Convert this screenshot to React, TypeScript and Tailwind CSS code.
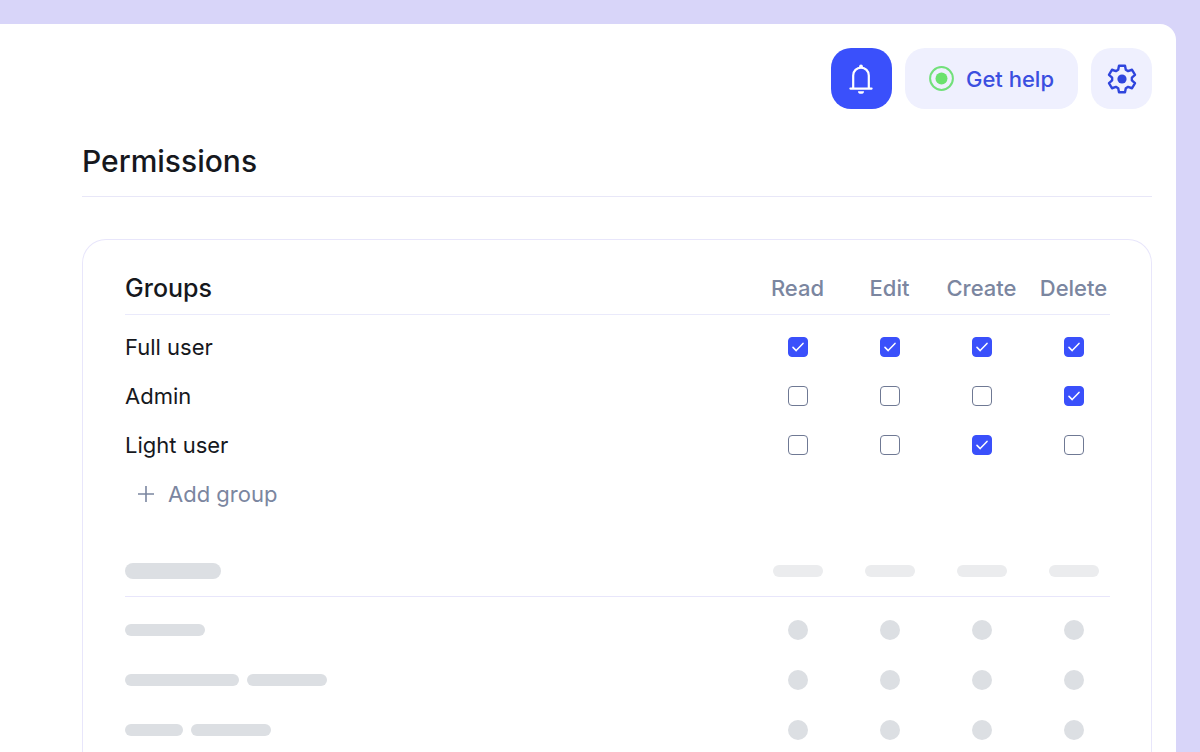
import { useState } from 'react';

const permissions = ['Read', 'Edit', 'Create', 'Delete'];

interface Group {
    name: string;
    granted: string[];
}

const initialGroups: Group[] = [
    { name: 'Full user', granted: ['Read', 'Edit', 'Create', 'Delete'] },
    { name: 'Admin', granted: ['Delete'] },
    { name: 'Light user', granted: ['Create'] },
];

const placeholderRows = [['w-20'], ['w-[114px]', 'w-20'], ['w-[58px]', 'w-20']];

function BellIcon() {
    return (
        <svg width="24" height="30" viewBox="0 0 24 30" fill="none" aria-hidden="true">
            <path d="M4.2 24.5V11.4a7.8 7.8 0 0 1 15.6 0v13.1" stroke="#fff" strokeWidth="2.2" />
            <path d="M1.4 24.6h21.2" stroke="#fff" strokeWidth="2.2" strokeLinecap="round" />
            <circle cx="12" cy="2.4" r="1.9" fill="#fff" />
            <path d="M9 27.2h6a3 2.6 0 0 1-6 0z" fill="#fff" />
        </svg>
    );
}

function GearIcon() {
    return (
        <svg width="30" height="30" viewBox="-15 -15 30 30" fill="none" aria-hidden="true">
            <path
                d="M-3.8-9.2-3-13.3H3L3.8-9.2 6.07-7.89 10.02-9.25 13.02-4.05 9.87-1.31V1.31L13.02 4.05 10.02 9.25 6.07 7.89 3.8 9.2 3 13.3H-3L-3.8 9.2-6.07 7.89-10.02 9.25-13.02 4.05-9.87 1.31V-1.31L-13.02-4.05-10.02-9.25-6.07-7.89Z"
                stroke="#2f45dd"
                strokeWidth="2.4"
                strokeLinejoin="round"
            />
            <circle r="4.6" fill="#2f45dd" />
        </svg>
    );
}

function OnlineIcon() {
    return (
        <svg width="25" height="25" viewBox="0 0 25 25" fill="none" aria-hidden="true">
            <circle cx="12.5" cy="12.5" r="11.4" stroke="#72e07a" strokeWidth="2" />
            <circle cx="12.5" cy="12.5" r="6" fill="#6be26d" />
        </svg>
    );
}

interface PermissionCheckboxProps {
    label: string;
    checked: boolean;
    onChange: () => void;
}

function PermissionCheckbox({ label, checked, onChange }: PermissionCheckboxProps) {
    return (
        <label className="mx-auto grid w-5 h-5 cursor-pointer place-items-center">
            <input
                type="checkbox"
                aria-label={label}
                checked={checked}
                onChange={onChange}
                className="col-start-1 row-start-1 w-5 h-5 appearance-none rounded border border-[#6f7994] bg-white checked:border-[#3a50fb] checked:bg-[#3a50fb] cursor-pointer"
            />
            {checked && (
                <svg
                    width="12"
                    height="10"
                    viewBox="0 0 12 10"
                    fill="none"
                    aria-hidden="true"
                    className="col-start-1 row-start-1 pointer-events-none"
                >
                    <path d="M1 5.4 4.2 8.6 11 1.4" stroke="#fff" strokeWidth="1.5" strokeLinecap="round" strokeLinejoin="round" />
                </svg>
            )}
        </label>
    );
}

export default function App() {
    const [groups, setGroups] = useState(initialGroups);

    const toggle = (name: string, permission: string) => {
        setGroups(groups.map((group) => {
            if (group.name !== name) return group;
            const granted = group.granted.includes(permission)
                ? group.granted.filter((item) => item !== permission)
                : [...group.granted, permission];
            return { ...group, granted };
        }));
    };

    return (
        <div className="flex h-screen overflow-hidden bg-[#d8d5f9] pt-6 pr-6 font-['Inter',sans-serif] text-[#16181d]">
            <main className="flex flex-1 flex-col rounded-tr-2xl bg-white pt-6 pr-6 pl-[82px]">
                {/* Toolbar */}
                <header className="flex shrink-0 justify-end gap-[13px]">
                    <button
                        type="button"
                        aria-label="Notifications"
                        className="flex w-[61px] h-[61px] items-center justify-center rounded-[20px] bg-[#3a50fb]"
                    >
                        <BellIcon />
                    </button>
                    <button
                        type="button"
                        className="flex h-[61px] items-center gap-3 rounded-[20px] bg-[#eff0fe] px-6 text-[22px] leading-8 font-medium text-[#3b4fe0]"
                    >
                        <OnlineIcon />
                        Get help
                    </button>
                    <button
                        type="button"
                        aria-label="Settings"
                        className="flex w-[61px] h-[61px] items-center justify-center rounded-[20px] bg-[#eff0fe]"
                    >
                        <GearIcon />
                    </button>
                </header>

                <h1 className="mt-8 shrink-0 border-b border-[#e8e7f8] pb-[15px] text-[30px] leading-10 font-medium">
                    Permissions
                </h1>

                <section className="mt-[42px] flex-1 rounded-t-3xl border border-b-0 border-[#e8e6fb] pt-8 pr-[41px] pl-[42px]">
                    <table className="w-full table-fixed border-separate border-spacing-0">
                        <thead>
                            <tr>
                                <th scope="col" className="border-b border-[#eaeafb] pb-2.5 text-left text-[25px] leading-8 font-medium">
                                    Groups
                                </th>
                                {permissions.map((permission) => (
                                    <th
                                        key={permission}
                                        scope="col"
                                        className="w-[92px] border-b border-[#eaeafb] pb-2.5 pl-[19px] text-center text-[22px] leading-8 font-medium text-[#7b86a0]"
                                    >
                                        {permission}
                                    </th>
                                ))}
                            </tr>
                        </thead>
                        <tbody className="before:block before:h-[7px]">
                            {groups.map((group) => (
                                <tr key={group.name} className="h-[49px]">
                                    <th scope="row" className="text-left text-[22px] leading-8 font-normal">
                                        {group.name}
                                    </th>
                                    {permissions.map((permission) => (
                                        <td key={permission} className="pl-[19px]">
                                            <PermissionCheckbox
                                                label={`${group.name}: ${permission}`}
                                                checked={group.granted.includes(permission)}
                                                onChange={() => toggle(group.name, permission)}
                                            />
                                        </td>
                                    ))}
                                </tr>
                            ))}
                        </tbody>
                    </table>

                    <button type="button" className="flex h-[49px] items-center gap-3.5 pl-[13px] text-[22px] leading-8 text-[#7b86a0]">
                        <svg width="16" height="16" viewBox="0 0 16 16" fill="none" aria-hidden="true">
                            <path d="M8 0v16M0 8h16" stroke="currentColor" strokeWidth="1.6" />
                        </svg>
                        Add group
                    </button>

                    {/* Loading placeholder */}
                    <div aria-hidden="true" className="mt-7">
                        <div className="flex h-[51px] items-center border-b border-[#e8e6fb]">
                            <div className="w-24 h-4 rounded-full bg-[#dcdfe3]" />
                            <div className="ml-auto flex">
                                {permissions.map((permission) => (
                                    <div key={permission} className="flex w-[92px] justify-center pl-[19px]">
                                        <div className="w-[50px] h-3 rounded-full bg-[#ebecee]" />
                                    </div>
                                ))}
                            </div>
                        </div>
                        <div className="pt-2">
                            {placeholderRows.map((bars, row) => (
                                <div key={row} className="flex h-[50px] items-center gap-2">
                                    {bars.map((width, index) => (
                                        <div key={index} className={`h-3 rounded-full bg-[#dcdfe3] ${width}`} />
                                    ))}
                                    <div className="ml-auto flex">
                                        {permissions.map((permission) => (
                                            <div key={permission} className="flex w-[92px] justify-center pl-[19px]">
                                                <div className="w-5 h-5 rounded-full bg-[#dcdfe3]" />
                                            </div>
                                        ))}
                                    </div>
                                </div>
                            ))}
                        </div>
                    </div>
                </section>
            </main>
        </div>
    );
}
